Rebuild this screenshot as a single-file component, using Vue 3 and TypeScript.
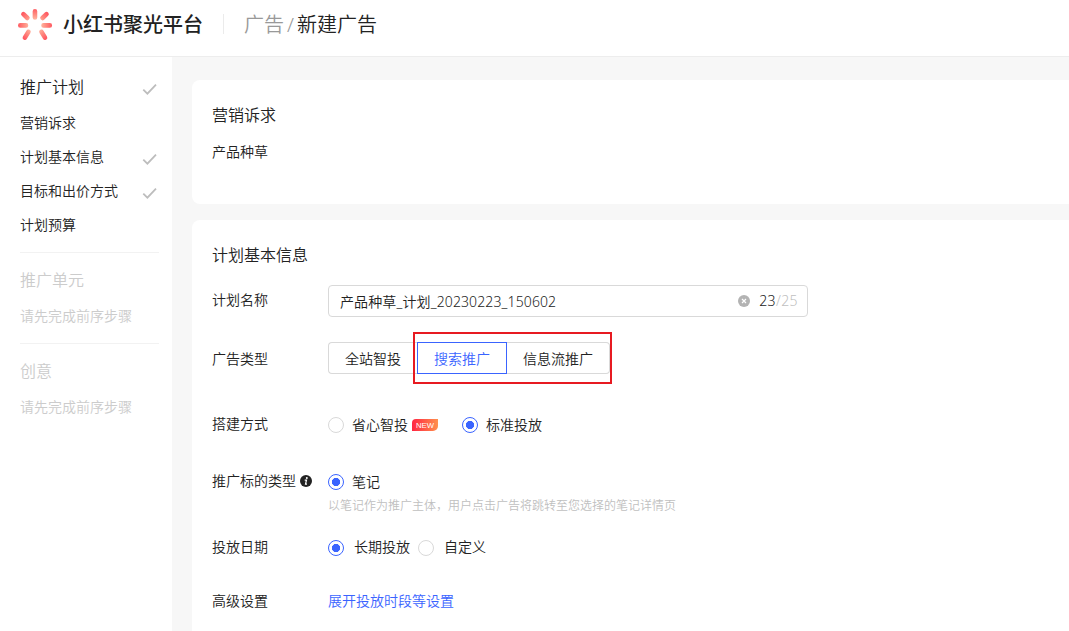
<script setup lang="ts">
import { ref } from 'vue'

interface NavItem {
  label: string
  done?: boolean
}
interface NavGroup {
  title: string
  done?: boolean
  disabled?: boolean
  items: NavItem[]
}

const groups: NavGroup[] = [
  {
    title: '推广计划',
    done: true,
    items: [
      { label: '营销诉求' },
      { label: '计划基本信息', done: true },
      { label: '目标和出价方式', done: true },
      { label: '计划预算' },
    ],
  },
  { title: '推广单元', disabled: true, items: [{ label: '请先完成前序步骤' }] },
  { title: '创意', disabled: true, items: [{ label: '请先完成前序步骤' }] },
]

const adTypes = ['全站智投', '搜索推广', '信息流推广']
const adType = ref('搜索推广')
const buildMode = ref('standard')
const dateMode = ref('long')
const planName = ref('产品种草_计划_20230223_150602')
</script>

<template>
  <div class="page">
    <header class="header">
      <svg class="logo" width="36" height="34" viewBox="0 0 36 34">
        <defs>
          <radialGradient id="ray" gradientUnits="userSpaceOnUse" cx="18" cy="17.3" r="17">
            <stop offset="0.35" stop-color="#ffb8a2" />
            <stop offset="0.65" stop-color="#ff8b80" />
            <stop offset="1" stop-color="#ff5a62" />
          </radialGradient>
        </defs>
        <g fill="none" stroke="url(#ray)" stroke-width="4.6" stroke-linecap="round">
          <path d="M17.95 3.3L17.96 9.4" />
          <path d="M6.4 6.1L10.4 10" />
          <path d="M29.5 6.1L25.5 10" />
          <path d="M3.3 17.4L9 17.41" />
          <path d="M26.5 17.4L32.8 17.41" />
          <path d="M11.4 23.8L7.9 29.7" />
          <path d="M24.5 23.8L28 29.7" />
        </g>
      </svg>
      <span class="brand">小红书聚光平台</span>
      <span class="split"></span>
      <span class="crumb">广告</span>
      <span class="slash">/</span>
      <span class="current">新建广告</span>
    </header>

    <div class="body">
      <nav class="sidebar">
        <section v-for="g in groups" :key="g.title" class="group" :class="{ disabled: g.disabled }">
          <div class="group-title">
            <span>{{ g.title }}</span>
            <svg v-if="g.done" class="check" width="16" height="14" viewBox="0 0 16 14">
              <path d="M1.3 7.7L5.4 11.7L14 2.7" />
            </svg>
          </div>
          <div v-for="i in g.items" :key="i.label" class="nav-item">
            <span>{{ i.label }}</span>
            <svg v-if="i.done" class="check" width="16" height="14" viewBox="0 0 16 14">
              <path d="M1.3 7.7L5.4 11.7L14 2.7" />
            </svg>
          </div>
        </section>
      </nav>

      <main class="content">
        <section class="card appeal">
          <h2>营销诉求</h2>
          <p>产品种草</p>
        </section>

        <section class="card basic">
          <h2>计划基本信息</h2>

          <div class="row name-row">
            <label>计划名称</label>
            <div class="input">
              <span class="value">{{ planName }}</span>
              <svg width="12" height="12" viewBox="0 0 12 12">
                <circle cx="6" cy="6" r="6" fill="#b3b3b3" />
                <path d="M4 4L8 8M8 4L4 8" stroke="#fff" stroke-width="1.2" />
              </svg>
              <span class="count">23<em>/25</em></span>
            </div>
          </div>

          <div class="row type-row">
            <label>广告类型</label>
            <div class="segments">
              <button
                v-for="t in adTypes"
                :key="t"
                class="segment"
                :class="{ active: t === adType }"
                @click="adType = t"
              >{{ t }}</button>
              <span class="highlight"></span>
            </div>
          </div>

          <div class="row mode-row">
            <label>搭建方式</label>
            <div class="radios">
              <span class="radio" :class="{ on: buildMode === 'easy' }" @click="buildMode = 'easy'"></span>
              <span class="radio-text">省心智投</span>
              <svg class="new" width="26" height="12" viewBox="0 0 26 12">
                <defs>
                  <linearGradient id="newFill">
                    <stop offset="0" stop-color="#ff2442" />
                    <stop offset="1" stop-color="#ff914d" />
                  </linearGradient>
                </defs>
                <path d="M4 0H26V7A5 5 0 0 1 21 12H0V4A4 4 0 0 1 4 0Z" fill="url(#newFill)" />
                <text x="13" y="8.8" text-anchor="middle" textLength="18" lengthAdjust="spacingAndGlyphs">NEW</text>
              </svg>
              <span class="radio second" :class="{ on: buildMode === 'standard' }" @click="buildMode = 'standard'"></span>
              <span class="radio-text">标准投放</span>
            </div>
          </div>

          <div class="row target-row">
            <label>
              推广标的类型
              <svg class="info" width="12" height="12" viewBox="0 0 12 12">
                <circle cx="6" cy="6" r="6" fill="#222" />
                <circle cx="6.8" cy="3" r="1" fill="#fff" />
                <path d="M4.7 5.2H6.5L5.5 9.2H7" fill="none" stroke="#fff" stroke-width="1.2" />
              </svg>
            </label>
            <div class="radios">
              <span class="radio on"></span>
              <span class="radio-text">笔记</span>
            </div>
          </div>
          <p class="hint">以笔记作为推广主体，用户点击广告将跳转至您选择的笔记详情页</p>

          <div class="row date-row">
            <label>投放日期</label>
            <div class="radios wide">
              <span class="radio" :class="{ on: dateMode === 'long' }" @click="dateMode = 'long'"></span>
              <span class="radio-text">长期投放</span>
              <span class="radio third" :class="{ on: dateMode === 'custom' }" @click="dateMode = 'custom'"></span>
              <span class="radio-text">自定义</span>
            </div>
          </div>

          <div class="row advanced-row">
            <label>高级设置</label>
            <a class="link">展开投放时段等设置</a>
          </div>
        </section>
      </main>
    </div>
  </div>
</template>

<style>
body {
  margin: 0;
  overflow: hidden;
}
</style>

<style scoped>
.page {
  height: 631px;
  display: flex;
  flex-direction: column;
  overflow: hidden;
  background: #fff;
  color: #222;
  font: 14px/20px "Noto Sans", "Noto Sans CJK SC", sans-serif;
  font-weight: 350;
  white-space: nowrap;
}
.header {
  box-sizing: border-box;
  flex: none;
  height: 57px;
  padding: 0 0 8px 17px;
  display: flex;
  align-items: center;
  border-bottom: 1px solid #ededed;
  font-size: 20px;
  line-height: 28px;
}
.logo {
  margin-right: 10px;
  margin-top: 2px;
}
.brand,
.crumb,
.slash,
.current {
  padding-top: 2px;
}
.brand {
  font-weight: 500;
  color: #222;
}
.split {
  width: 1px;
  height: 20px;
  margin: 0 20px;
  background: #ebebeb;
}
.crumb,
.slash {
  color: #999;
}
.slash {
  width: 13px;
  text-align: center;
}
.body {
  flex: 1;
  display: flex;
  min-height: 0;
}
.sidebar {
  box-sizing: border-box;
  flex: none;
  width: 172px;
  padding: 17px 13px 0 20px;
}
.group + .group {
  border-top: 1px solid #f2f2f2;
  padding-top: 14px;
}
.group {
  padding-bottom: 10px;
}
.group-title {
  display: flex;
  justify-content: space-between;
  align-items: center;
  height: 26px;
  margin-bottom: 6px;
  font-size: 16px;
}
.nav-item {
  display: flex;
  justify-content: space-between;
  align-items: center;
  height: 34px;
}
.check {
  margin: 3px 1px 0 0;
  fill: none;
  stroke: #bdbdbd;
  stroke-width: 1.8;
}
.disabled {
  color: #ccc;
}
.content {
  flex: 1;
  min-width: 0;
  padding: 23px 0 0 20px;
  display: flex;
  flex-direction: column;
  gap: 16px;
  background: #f7f7f7;
}
.card {
  box-sizing: border-box;
  padding: 23px 0 0 20px;
  background: #fff;
  border-radius: 8px 0 0 8px;
}
.appeal {
  flex: none;
  height: 124px;
}
.basic {
  flex: 1;
  border-bottom-left-radius: 0;
}
h2 {
  margin: 0;
  font-size: 16px;
  line-height: 24px;
  font-weight: inherit;
}
p {
  margin: 0;
}
.appeal p {
  margin-top: 15px;
}
.row {
  display: flex;
  align-items: center;
  height: 32px;
}
.row label {
  flex: none;
  display: flex;
  align-items: center;
  width: 116px;
}
.name-row label,
.mode-row label,
.target-row label,
.date-row label {
  padding-bottom: 2px;
}
.type-row label {
  padding-top: 2px;
}
.name-row {
  margin-top: 18px;
}
.input {
  box-sizing: border-box;
  display: flex;
  align-items: center;
  width: 480px;
  height: 32px;
  padding: 0 9px 0 11px;
  border: 1px solid #d9d9d9;
  border-radius: 4px;
}
.value {
  flex: 1;
  padding-top: 1px;
  letter-spacing: 0.12px;
}
.count {
  margin-left: 9px;
  letter-spacing: 0.4px;
}
.count em {
  font-style: normal;
  color: #bfbfbf;
}
.type-row {
  margin-top: 25px;
}
.segments {
  position: relative;
  display: flex;
}
.segment {
  box-sizing: border-box;
  height: 32px;
  padding: 2px 16px 0;
  border: 1px solid #d9d9d9;
  background: #fff;
  color: inherit;
  font: inherit;
}
.segment:first-child {
  width: 89px;
  border-right: 0;
  border-radius: 4px 0 0 4px;
}
.segment:nth-child(3) {
  width: 103px;
  border-left: 0;
  border-radius: 0 4px 4px 0;
}
.segment.active {
  width: 90px;
  border-color: #3a64ff;
  color: #3a64ff;
}
.highlight {
  position: absolute;
  box-sizing: border-box;
  left: 85px;
  top: -10px;
  width: 199px;
  height: 52px;
  border: 2px solid #e71a21;
  pointer-events: none;
}
.mode-row {
  margin-top: 35px;
}
.radios {
  display: flex;
  align-items: center;
}
.radio {
  box-sizing: border-box;
  width: 16px;
  height: 16px;
  margin-right: 8px;
  border: 1px solid #d9d9d9;
  border-radius: 50%;
}
.radio.on {
  border-color: #3a64ff;
  background: radial-gradient(circle, #3a64ff 3.8px, #fff 4.4px);
}
.wide .radio {
  margin-right: 10px;
}
.wide .radio-text {
  padding-bottom: 2px;
}
.new {
  margin-left: 4px;
}
.new text {
  fill: #fff;
  font: 500 7.5px "Liberation Sans", sans-serif;
}
.second {
  margin-left: 24px;
}
.wide .third {
  margin-left: 8px;
}
.target-row {
  margin-top: 25px;
}
.info {
  margin-left: 4px;
}
.hint {
  margin-left: 116px;
  margin-top: -2px;
  font-size: 12px;
  color: #bfbfbf;
}
.date-row {
  margin-top: 16px;
}
.advanced-row {
  margin-top: 21px;
}
.link {
  color: #3a64ff;
}
</style>
